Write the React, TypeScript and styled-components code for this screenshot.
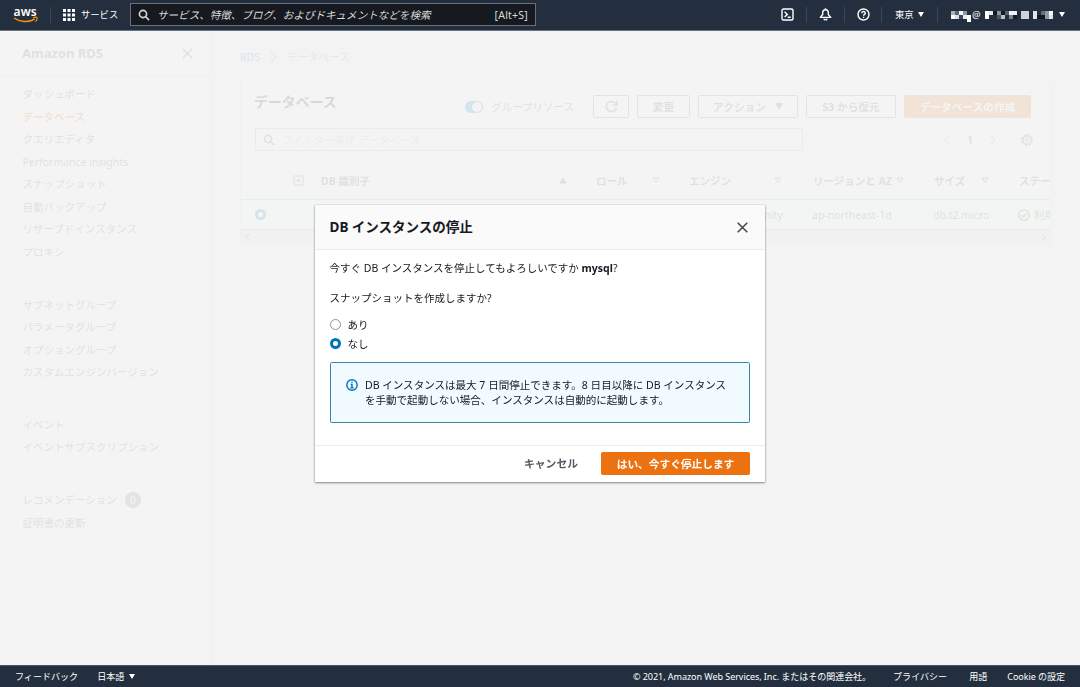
import React from "react";
import styled, { createGlobalStyle } from "styled-components";

const Global = createGlobalStyle`
  * { box-sizing: border-box; }
  body {
    margin: 0;
    background: #f2f3f3;
    color: #16191f;
    font-family: "Noto Sans", "Noto Sans CJK JP", sans-serif;
    font-size: 10.5px;
    line-height: 16px;
    overflow: hidden;
  }
  svg { display: block; flex: none; overflow: visible; }
  ul { list-style: none; margin: 0; padding: 0; }
  h1, h2, p { margin: 0; }
`;

const Shell = styled.div`
  display: flex;
  flex-direction: column;
  height: 687px;
  width: 1080px;
  white-space: nowrap;
`;

/* ---------- top bar ---------- */

const TopBar = styled.header`
  position: relative;
  z-index: 3;
  display: flex;
  align-items: center;
  flex: none;
  height: 31px;
  padding: 0 14px 1px 13px;
  background: #232f3e;
  border-bottom: 1px solid #6a7480;
  color: #fff;
  font-size: 9.3px;
`;

const Rule = styled.span<{ $left: number; $right: number }>`
  width: 1px;
  height: 16px;
  margin: 0 ${(p) => p.$right}px 0 ${(p) => p.$left}px;
  background: #3c4754;
`;

const ServicesButton = styled.div`
  display: flex;
  align-items: center;
  gap: 6px;
  width: 67px;
`;

const SearchBox = styled.div`
  display: flex;
  align-items: center;
  width: 406px;
  height: 23px;
  padding: 0 7px 0 7px;
  border: 1px solid #687078;
  background: #16191f;
  color: #d5dbdb;
  font-size: 10.56px;
`;

const SearchHint = styled.span`
  margin-left: 7px;
  font-style: italic;
`;

const Shortcut = styled.span`
  margin-left: auto;
  letter-spacing: 0.2px;
`;

const TopTools = styled.div`
  display: flex;
  align-items: center;
  margin-left: auto;
`;

const Caret = styled.span<{ $size?: number }>`
  display: inline-block;
  border: ${(p) => p.$size ?? 3}px solid transparent;
  border-top: ${(p) => (p.$size ?? 3) * 1.8}px solid currentColor;
  border-bottom: 0;
`;

const RegionMenu = styled.div`
  display: flex;
  align-items: center;
  gap: 4px;
  width: 30px;
`;

const AccountMenu = styled.div`
  display: flex;
  align-items: center;
  width: 115px;
`;

const AtSign = styled.span`
  width: 14px;
  padding-left: 1px;
  font-size: 9.5px;
`;

/* ---------- body ---------- */

const Body = styled.div`
  display: flex;
  flex: 1;
  min-height: 0;
`;

const Sidebar = styled.nav`
  flex: none;
  width: 211px;
  background: #fff;
  border-right: 1px solid #d5dbdb;
  color: #545b64;
`;

const SideTitle = styled.div`
  display: flex;
  align-items: center;
  justify-content: space-between;
  height: 45px;
  padding: 0 17px 0 22px;
  border-bottom: 1px solid #d5dbdb;
  font-size: 13px;
  font-weight: 700;
`;

const SideGroup = styled.ul`
  margin: 0 19px 0 16px;
  padding: 0 6.5px 14px;
  & + & {
    border-top: 1px solid #eaeded;
    padding-top: 15.3px;
  }
`;

const FirstGroupSpace = styled.div`
  height: 7px;
`;

const SideItem = styled.li<{ $active?: boolean }>`
  display: flex;
  align-items: center;
  gap: 8px;
  height: 22.5px;
  color: ${(p) => (p.$active ? "#ec7211" : "inherit")};
  font-weight: ${(p) => (p.$active ? 700 : 400)};
`;

const Count = styled.span`
  width: 16px;
  height: 16px;
  border-radius: 8px;
  background: #687078;
  color: #fff;
  text-align: center;
`;

const Main = styled.main`
  flex: 1;
  min-width: 0;
  padding: 18px 29px 0;
`;

const Crumbs = styled.div`
  display: flex;
  align-items: center;
  gap: 10px;
  height: 16px;
  color: #879596;
`;

const CrumbLink = styled.span`
  color: #0073bb;
`;

const Panel = styled.section`
  width: 811px;
  margin-top: 15px;
  overflow: hidden;
  background: #fff;
  border: 1px solid #d5dbdb;
  border-top-color: #eaeded;
`;

const PanelHead = styled.div`
  display: flex;
  align-items: center;
  gap: 8px;
  height: 23px;
  margin: 14px 19px 0 13px;
`;

const PanelTitle = styled.h1`
  flex: 1;
  align-self: flex-start;
  font-size: 13.9px;
  line-height: 14px;
  color: #16191f;
`;

const Toggle = styled.span`
  display: flex;
  align-items: center;
  gap: 8px;
  margin-right: 11px;
  color: #545b64;
`;

const Track = styled.span`
  display: flex;
  justify-content: flex-end;
  align-items: center;
  width: 18px;
  height: 12px;
  padding-right: 1px;
  border-radius: 6px;
  background: #0073bb;
`;

const Knob = styled.span`
  width: 10px;
  height: 10px;
  border-radius: 5px;
  background: #fff;
`;

const Button = styled.span<{ $width: number; $primary?: boolean }>`
  display: flex;
  align-items: center;
  justify-content: center;
  gap: 9px;
  width: ${(p) => p.$width}px;
  height: 23px;
  border: 1px solid ${(p) => (p.$primary ? "#ec7211" : "#687078")};
  border-radius: 1.5px;
  background: ${(p) => (p.$primary ? "#ec7211" : "transparent")};
  color: ${(p) => (p.$primary ? "#fff" : "#545b64")};
  font-size: 10.7px;
  font-weight: 700;
`;

const FilterRow = styled.div`
  display: flex;
  align-items: center;
  height: 23px;
  margin: 10px 17px 0 14px;
  color: #545b64;
`;

const FilterInput = styled.div`
  display: flex;
  align-items: center;
  gap: 6px;
  width: 548px;
  height: 23px;
  padding-left: 7px;
  border: 1px solid #aab7b8;
`;

const FilterHint = styled.span`
  color: #aab7b8;
  font-style: italic;
`;

const Pager = styled.div`
  display: flex;
  align-items: center;
  justify-content: space-between;
  width: 52px;
  margin-left: auto;
  color: #aab7b8;
`;

const PageNumber = styled.b`
  color: #545b64;
`;

const PagerRule = styled.span`
  width: 1px;
  height: 22px;
  margin: 0 12px 0 12px;
  background: #eaeded;
`;

const GridRow = styled.div<{ $selected?: boolean }>`
  display: grid;
  grid-template-columns: 40px 300px 93px 124px 121px 85px 1fr;
  align-items: center;
  height: ${(p) => (p.$selected ? 31 : 37)}px;
  margin-top: ${(p) => (p.$selected ? 0 : 11)}px;
  background: ${(p) => (p.$selected ? "#f1faff" : "transparent")};
  border: 1px solid ${(p) => (p.$selected ? "#7fc4d8" : "transparent")};
  border-width: 1px 0;
  color: #545b64;
  font-weight: ${(p) => (p.$selected ? 400 : 700)};
`;

const Cell = styled.div<{ $right?: number }>`
  display: flex;
  align-items: center;
  justify-content: space-between;
  height: 20px;
  padding: 0 ${(p) => p.$right ?? 14}px 0 14px;
`;

const HeadCell = styled(Cell)`
  border-left: 1px solid #eaeded;
`;

const IdLabel = styled.span`
  display: flex;
  align-items: center;
  gap: 17px;
  margin-left: -3px;
`;

const StatusText = styled.span`
  display: flex;
  align-items: center;
  gap: 4px;
  color: #1d8102;
`;

const ScrollStrip = styled.div`
  display: flex;
  align-items: center;
  justify-content: space-between;
  height: 13px;
  padding: 0 4px;
  background: #e4e6e6;
  color: #545b64;
`;

/* ---------- dialog ---------- */

const Overlay = styled.div`
  position: fixed;
  inset: 0;
  z-index: 2;
  display: flex;
  align-items: center;
  justify-content: center;
  background: rgba(242, 242, 242, 0.88);
`;

const Dialog = styled.div`
  width: 450px;
  height: 277px;
  display: flex;
  flex-direction: column;
  background: #fff;
  box-shadow: 0 1px 2px rgba(0, 28, 36, 0.45), 0 0 1px rgba(0, 28, 36, 0.35);
`;

const DialogHead = styled.div`
  display: flex;
  align-items: center;
  justify-content: space-between;
  height: 45px;
  padding: 0 17px 0 14.5px;
  background: #fafafa;
  border-bottom: 1px solid #eaeded;
  color: #414750;
`;

const DialogTitle = styled.h2`
  font-size: 13.5px;
  line-height: 20px;
  color: #16191f;
`;

const DialogBody = styled.div`
  flex: 1;
  padding: 10px 15px 0 14.5px;
`;

const Paragraph = styled.p`
  height: 16px;
  margin-bottom: 14px;
`;

const Options = styled.div`
  margin-top: -5px;
`;

const Option = styled.div`
  display: flex;
  align-items: center;
  gap: 7px;
  height: 19px;
`;

const RadioDot = styled.span<{ $on?: boolean }>`
  width: 11px;
  height: 11px;
  border-radius: 50%;
  background: #fff;
  border: ${(p) => (p.$on ? "3.5px solid #0073bb" : "1px solid #879596")};
`;

const Notice = styled.div`
  display: flex;
  gap: 7.5px;
  height: 61px;
  margin-top: 9px;
  padding: 15px 10px 0 15px;
  background: #f1faff;
  border: 1px solid #3585a5;
  border-radius: 1.5px;
  font-size: 10.54px;
  line-height: 15px;
`;

const NoticeIcon = styled.span`
  padding-top: 1px;
`;

const DialogFoot = styled.div`
  display: flex;
  align-items: center;
  justify-content: flex-end;
  gap: 23px;
  height: 37px;
  padding: 0 15px 1px;
  border-top: 1px solid #eaeded;
`;

const CancelText = styled.span`
  color: #545b64;
  font-size: 10.8px;
  font-weight: 700;
`;

/* ---------- bottom bar ---------- */

const BottomBar = styled.footer`
  position: relative;
  z-index: 3;
  display: flex;
  align-items: center;
  flex: none;
  height: 22px;
  padding: 0 15px;
  background: #232f3e;
  border-top: 1px solid #4a5562;
  color: #fff;
  font-size: 9.05px;
`;

const FootItem = styled.span<{ $gap?: number; $push?: boolean; $tight?: boolean }>`
  display: flex;
  align-items: center;
  gap: 5px;
  margin-left: ${(p) => (p.$push ? "auto" : `${p.$gap ?? 0}px`)};
  letter-spacing: ${(p) => (p.$tight ? "-0.07px" : "normal")};
`;

/* ---------- drawings ---------- */

const AwsLogo = () => (
  <svg width="26" height="18" viewBox="0 0 26 18">
    <text x="0.6" y="10" fill="#fff" fontSize="13.2" fontWeight="600" fontFamily="Noto Sans" textLength="23" lengthAdjust="spacingAndGlyphs">aws</text>
    <path d="M1 12c6 4.300 14.600 4.600 20.600 1.100" fill="none" stroke="#f90" strokeWidth="1.500" />
    <path d="M20 12c1.700-.9 3.600-.8 4-.3s-.1 2.700-1.400 3.900" fill="none" stroke="#f90" strokeWidth="1.100" />
  </svg>
);

const AppGrid = () => (
  <svg width="12" height="12" fill="currentColor">
    {[0, 4.5, 9].map((y) => [0, 4.5, 9].map((x) => <rect key={`${x}-${y}`} x={x} y={y} width="3" height="3" />))}
  </svg>
);

const Magnifier = ({ size = 12 }: { size?: number }) => (
  <svg width={size} height={size} viewBox="0 0 12 12" fill="none" stroke="currentColor" strokeWidth="1.6">
    <circle cx="5" cy="5" r="3.600" />
    <path d="M7.700 7.700l3.400 3.400" />
  </svg>
);

const Cross = ({ size = 11, weight = 1.5 }: { size?: number; weight?: number }) => (
  <svg width={size} height={size} viewBox="0 0 11 11" fill="none" stroke="currentColor" strokeWidth={weight}>
    <path d="M.7.7l9.600 9.600M10.300.7L.7 10.300" />
  </svg>
);

const Terminal = () => (
  <svg width="13" height="13" fill="none" stroke="currentColor" strokeWidth="1.4">
    <rect x="1" y="1" width="11" height="11" rx="1.500" />
    <path d="M3.600 3.800l2.700 2.600-2.700 2.600M6.700 9.300h3" />
  </svg>
);

const Bell = () => (
  <svg width="13" height="13" fill="none" stroke="currentColor" strokeWidth="1.4" strokeLinejoin="round">
    <path d="M1.300 9.400h10.400L9.300 6.500V4.800a2.800 3 0 0 0-5.600 0v1.700z" />
    <path d="M6.500 .3v1.700M4.900 10.600c.3 1.700 2.900 1.700 3.200 0" />
  </svg>
);

const Help = () => (
  <svg width="13" height="13" fill="none" stroke="currentColor" strokeWidth="1.4">
    <circle cx="6.500" cy="6.500" r="5.500" />
    <path d="M4.700 5.300c0-2.300 3.600-2.300 3.600-.1 0 1.300-1.800 1.200-1.800 2.600M6.500 8.700v1.400" />
  </svg>
);

const Chevron = ({ flip, w = 7, h = 12 }: { flip?: boolean; w?: number; h?: number }) => (
  <svg width={w} height={h} viewBox="0 0 7 12" fill="none" stroke="currentColor" strokeWidth="1.4">
    <path d={flip ? "M6 1L1 6l5 5" : "M1 1l5 5-5 5"} />
  </svg>
);

const Refresh = () => (
  <svg width="13" height="13" fill="none" stroke="currentColor" strokeWidth="1.5">
    <path d="M11.300 8a5.100 5.100 0 1 1-.8-4.600l1 1.300M12 .5v4.400H7.700" />
  </svg>
);

const Gear = () => (
  <svg width="12" height="12" viewBox="0 0 12 12" fill="none" stroke="currentColor">
    <circle cx="6" cy="6" r="4.200" strokeWidth="1.300" />
    <circle cx="6" cy="6" r="1.600" />
    <circle cx="6" cy="6" r="5.300" strokeWidth="1.300" strokeDasharray="2.080 2.080" />
  </svg>
);

const Expander = () => (
  <svg width="11" height="11" fill="none" stroke="currentColor">
    <rect x="1" y="1" width="9" height="9" />
    <path d="M5.500 3.700v3.600M3.700 5.500h3.600" />
  </svg>
);

const Sort = ({ up }: { up?: boolean }) => (
  <svg width="8" height="7" fill={up ? "currentColor" : "none"} stroke="currentColor">
    <path d={up ? "M4 1l3 5H1z" : "M1 1h6L4 5.500z"} />
  </svg>
);

const Info = () => (
  <svg width="12" height="12" fill="none" stroke="#0073bb" strokeWidth="1.400">
    <circle cx="6" cy="6" r="5.200" />
    <path d="M6 2.700v1.300M4.700 5.500H6v3M4.500 8.800h3" />
  </svg>
);

const Check = () => (
  <svg width="12" height="12" fill="none" stroke="currentColor" strokeWidth="1.300">
    <circle cx="6" cy="6" r="5.200" />
    <path d="M3.500 6l1.900 1.900 3.300-3.500" />
  </svg>
);

const Mosaic = ({ cells, width }: { cells: [number, number, number, number, string][]; width: number }) => (
  <svg width={width} height="15" shapeRendering="crispEdges">
    {cells.map(([x, y, w, h, fill], i) => (
      <rect key={i} x={x} y={y} width={w} height={h} fill={fill} />
    ))}
  </svg>
);

const nameCells: [number, number, number, number, string][] = [
  [0, 4, 4, 4, "#a9b2bc"], [0, 8, 4, 4, "#fff"], [4, 4, 4, 4, "#5c6672"], [4, 8, 4, 4, "#d8dde2"],
  [8, 4, 4, 4, "#f4f6f8"], [8, 8, 4, 4, "#3a4552"], [12, 4, 4, 4, "#8c96a1"], [12, 8, 4, 4, "#e8ecef"], [16, 8, 4, 7, "#fff"],
];

const domainCells: [number, number, number, number, string][] = [
  [0, 4, 4, 8, "#fff"], [4, 4, 4, 4, "#e6eaed"], [8, 4, 4, 4, "#101a27"], [12, 4, 4, 4, "#8b95a0"],
  [12, 8, 4, 4, "#4c5764"], [16, 4, 4, 4, "#111b28"], [16, 8, 4, 4, "#b9c1c8"], [20, 4, 4, 4, "#56616d"],
  [24, 4, 4, 4, "#f2f4f6"], [24, 8, 4, 4, "#78828e"], [28, 4, 4, 4, "#eef1f3"], [28, 8, 4, 4, "#141e2b"],
  [36, 4, 8, 8, "#cdd3d9"], [48, 4, 4, 8, "#e2e6ea"], [52, 8, 8, 4, "#101a27"], [56, 4, 4, 4, "#65707c"],
  [60, 4, 4, 8, "#8f99a4"], [64, 4, 4, 4, "#f6f8f9"], [64, 8, 4, 4, "#dfe4e8"],
];

const groups: string[][] = [
  ["ダッシュボード", "データベース", "クエリエディタ", "Performance insights", "スナップショット", "自動バックアップ", "リザーブドインスタンス", "プロキシ"],
  ["サブネットグループ", "パラメータグループ", "オプショングループ", "カスタムエンジンバージョン"],
  ["イベント", "イベントサブスクリプション"],
  ["レコメンデーション", "証明書の更新"],
];

export default function App() {
  return (
    <Shell>
      <Global />
      <TopBar>
        <AwsLogo />
        <Rule $left={11} $right={12} />
        <ServicesButton>
          <AppGrid />
          サービス
        </ServicesButton>
        <SearchBox>
          <Magnifier />
          <SearchHint>サービス、特徴、ブログ、およびドキュメントなどを検索</SearchHint>
          <Shortcut>[Alt+S]</Shortcut>
        </SearchBox>
        <TopTools>
          <Terminal />
          <Rule $left={12} $right={12} />
          <Bell />
          <Rule $left={12} $right={12} />
          <Help />
          <Rule $left={11} $right={13} />
          <RegionMenu>
            東京
            <Caret />
          </RegionMenu>
          <Rule $left={12} $right={13} />
          <AccountMenu>
            <Mosaic cells={nameCells} width={20} />
            <AtSign>@</AtSign>
            <Mosaic cells={domainCells} width={74} />
            <Caret />
          </AccountMenu>
        </TopTools>
      </TopBar>

      <Body>
        <Sidebar>
          <SideTitle>
            Amazon RDS
            <Cross />
          </SideTitle>
          <FirstGroupSpace />
          {groups.map((items) => (
            <SideGroup key={items[0]}>
              {items.map((label) => (
                <SideItem key={label} $active={label === "データベース"}>
                  {label}
                  {label === "レコメンデーション" && <Count>0</Count>}
                </SideItem>
              ))}
            </SideGroup>
          ))}
        </Sidebar>

        <Main>
          <Crumbs>
            <CrumbLink>RDS</CrumbLink>
            <Chevron />
            データベース
          </Crumbs>
          <Panel>
            <PanelHead>
              <PanelTitle>データベース</PanelTitle>
              <Toggle>
                <Track>
                  <Knob />
                </Track>
                グループリソース
              </Toggle>
              <Button $width={36}>
                <Refresh />
              </Button>
              <Button $width={53}>変更</Button>
              <Button $width={100}>
                アクション
                <Caret $size={4} />
              </Button>
              <Button $width={90}>S3 から復元</Button>
              <Button $width={127} $primary>
                データベースの作成
              </Button>
            </PanelHead>
            <FilterRow>
              <FilterInput>
                <Magnifier />
                <FilterHint>フィルター条件 データベース</FilterHint>
              </FilterInput>
              <Pager>
                <Chevron flip />
                <PageNumber>1</PageNumber>
                <Chevron />
              </Pager>
              <PagerRule />
              <Gear />
            </FilterRow>
            <GridRow>
              <span />
              <HeadCell $right={14}>
                <IdLabel>
                  <Expander />
                  DB 識別子
                </IdLabel>
                <Sort up />
              </HeadCell>
              <HeadCell $right={14}>
                ロール
                <Sort />
              </HeadCell>
              <HeadCell $right={16}>
                エンジン
                <Sort />
              </HeadCell>
              <HeadCell $right={15}>
                リージョンと AZ
                <Sort />
              </HeadCell>
              <HeadCell $right={15}>
                サイズ
                <Sort />
              </HeadCell>
              <HeadCell>ステータス</HeadCell>
            </GridRow>
            <GridRow $selected>
              <Cell>
                <RadioDot $on />
              </Cell>
              <Cell />
              <Cell />
              <Cell>MySQL Community</Cell>
              <Cell>ap-northeast-1d</Cell>
              <Cell>db.t2.micro</Cell>
              <Cell>
                <StatusText>
                  <Check />
                  利用可能
                </StatusText>
              </Cell>
            </GridRow>
            <ScrollStrip>
              <Chevron flip w={5} h={8} />
              <Chevron w={5} h={8} />
            </ScrollStrip>
          </Panel>
        </Main>
      </Body>

      <Overlay>
        <Dialog>
          <DialogHead>
            <DialogTitle>DB インスタンスの停止</DialogTitle>
            <Cross />
          </DialogHead>
          <DialogBody>
            <Paragraph>
              今すぐ DB インスタンスを停止してもよろしいですか <b>mysql</b>?
            </Paragraph>
            <Paragraph>スナップショットを作成しますか?</Paragraph>
            <Options>
              <Option>
                <RadioDot />
                あり
              </Option>
              <Option>
                <RadioDot $on />
                なし
              </Option>
            </Options>
            <Notice>
              <NoticeIcon>
                <Info />
              </NoticeIcon>
              <p>
                DB インスタンスは最大 7 日間停止できます。8 日目以降に DB インスタンス
                <br />
                を手動で起動しない場合、インスタンスは自動的に起動します。
              </p>
            </Notice>
          </DialogBody>
          <DialogFoot>
            <CancelText>キャンセル</CancelText>
            <Button $width={149} $primary>
              はい、今すぐ停止します
            </Button>
          </DialogFoot>
        </Dialog>
      </Overlay>

      <BottomBar>
        <FootItem>フィードバック</FootItem>
        <FootItem $gap={19}>
          日本語
          <Caret />
        </FootItem>
        <FootItem $push $tight>© 2021, Amazon Web Services, Inc. またはその関連会社。</FootItem>
        <FootItem $gap={22}>プライバシー</FootItem>
        <FootItem $gap={22}>用語</FootItem>
        <FootItem $gap={20} $tight>Cookie の設定</FootItem>
      </BottomBar>
    </Shell>
  );
}
